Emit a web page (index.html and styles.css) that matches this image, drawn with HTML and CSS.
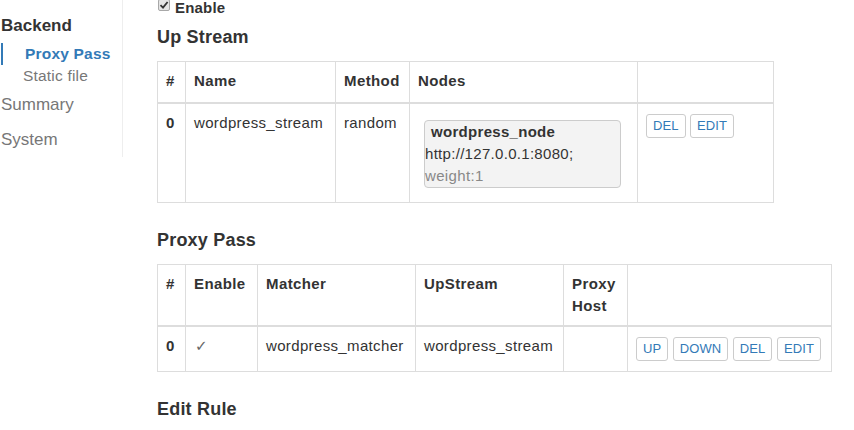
FILE: index.html
```html
<!DOCTYPE html>
<html>
<head>
<meta charset="utf-8">
<link rel="stylesheet" href="styles.css">
</head>
<body>
<div class="layout">
  <nav class="sidebar">
    <div class="nav-head">Backend</div>
    <a class="nav-sub active">Proxy Pass</a>
    <a class="nav-sub">Static file</a>
    <a class="nav-item">Summary</a>
    <a class="nav-item">System</a>
  </nav>
  <main class="content">
    <label class="enable"><span class="cbox"><svg width="10" height="10" viewBox="0 0 10 10"><path d="M1.5 5.2 L4 7.6 L8.6 2" fill="none" stroke="#333" stroke-width="1.8"/></svg></span>Enable</label>
    <h4 class="section-title first">Up Stream</h4>
    <table class="grid single-head">
      <colgroup>
        <col class="w28"><col class="w150"><col class="w74"><col class="w228"><col class="w136">
      </colgroup>
      <thead>
        <tr><th>#</th><th>Name</th><th>Method</th><th>Nodes</th><th></th></tr>
      </thead>
      <tbody>
        <tr>
          <td class="num">0</td>
          <td>wordpress_stream</td>
          <td>random</td>
          <td>
            <div class="node">
              <div class="node-name">wordpress_node</div>
              <div class="node-addr">http://127.0.0.1:8080;</div>
              <div class="node-weight">weight:1</div>
            </div>
          </td>
          <td><div class="actions"><button class="btn">DEL</button><button class="btn">EDIT</button></div></td>
        </tr>
      </tbody>
    </table>
    <h4 class="section-title">Proxy Pass</h4>
    <table class="grid">
      <colgroup>
        <col class="w28"><col class="w72"><col class="w158"><col class="w148"><col class="w64"><col class="w204">
      </colgroup>
      <thead>
        <tr><th>#</th><th>Enable</th><th>Matcher</th><th>UpStream</th><th>Proxy Host</th><th></th></tr>
      </thead>
      <tbody>
        <tr>
          <td class="num">0</td>
          <td><span class="check">✓</span></td>
          <td>wordpress_matcher</td>
          <td>wordpress_stream</td>
          <td></td>
          <td><div class="actions"><button class="btn">UP</button><button class="btn">DOWN</button><button class="btn">DEL</button><button class="btn">EDIT</button></div></td>
        </tr>
      </tbody>
    </table>
    <h4 class="section-title">Edit Rule</h4>
  </main>
</div>
</body>
</html>
```
FILE: styles.css
```css
html, body {
  margin: 0;
  background: #fff;
}
body {
  font-family: "Liberation Sans", Arial, sans-serif;
  font-size: 15px;
  line-height: 22px;
  color: #333;
}
.layout {
  display: flex;
  align-items: flex-start;
}
.sidebar {
  width: 122px;
  flex: none;
  border-right: 1px solid #eee;
  padding-top: 15px;
}
.nav-head {
  font-weight: bold;
  font-size: 17px;
  line-height: 22px;
  padding-left: 1px;
  margin-bottom: 6px;
}
.nav-sub {
  display: block;
  font-size: 15.5px;
  line-height: 22px;
  padding-left: 23px;
  color: #777;
  letter-spacing: 0.2px;
}
.nav-sub.active {
  color: #337ab7;
  font-weight: bold;
  border-left: 2px solid #337ab7;
  margin-left: 1px;
  padding-left: 22px;
}
.nav-item {
  display: block;
  font-size: 17px;
  line-height: 35px;
  padding-left: 1px;
  color: #777;
}
.content {
  padding-left: 34px;
  flex: 1;
}
.enable {
  display: block;
  margin-top: -3px;
  font-weight: bold;
  letter-spacing: 0.2px;
}
.cbox {
  display: inline-flex;
  align-items: center;
  justify-content: center;
  width: 10px;
  height: 10px;
  border: 1px solid #a8a8a8;
  border-radius: 2px;
  background: #e4e4e4;
  margin-left: 1px;
  margin-right: 5px;
  vertical-align: 3px;
}
.section-title {
  font-size: 18px;
  line-height: 20px;
  font-weight: bold;
  margin: 27px 0 14px;
  letter-spacing: 0.2px;
}
.section-title.first {
  margin-top: 8px;
}
.grid {
  border-collapse: collapse;
  table-layout: fixed;
  border: 1px solid #ddd;
}
.grid th,
.grid td {
  border: 1px solid #ddd;
  padding: 8px;
  text-align: left;
  vertical-align: top;
  letter-spacing: 0.35px;
}
.grid th {
  font-weight: bold;
  letter-spacing: 0.4px;
}
.grid thead th {
  border-bottom-width: 2px;
}
.single-head thead th {
  padding-bottom: 10px;
}
.num {
  font-weight: bold;
}
.w28 { width: 28px; }
.w72 { width: 72px; }
.w74 { width: 74px; }
.w64 { width: 64px; }
.w136 { width: 136px; }
.w148 { width: 148px; }
.w150 { width: 150px; }
.w158 { width: 158px; }
.w204 { width: 204px; }
.w228 { width: 228px; }
.node {
  width: 195px;
  margin: 8px 0 6px 6px;
  border: 1px solid #ccc;
  border-radius: 4px;
  background: #f3f3f3;
}
.node-name {
  font-weight: bold;
  padding-left: 6px;
  letter-spacing: 0.3px;
}
.node-addr {
  letter-spacing: 0.3px;
}
.node-weight {
  color: #888;
}
.check {
  font-family: "DejaVu Sans", sans-serif;
  font-size: 15px;
  color: #666;
  padding-left: 1px;
}
.actions {
  display: flex;
  gap: 4.5px;
}
.btn {
  font-family: "Liberation Sans", Arial, sans-serif;
  font-size: 13px;
  line-height: 18px;
  letter-spacing: 0.1px;
  padding: 2px 6px;
  margin: 2px 0;
  border: 1px solid #ccc;
  border-radius: 3px;
  background: #fff;
  color: #337ab7;
}
```
